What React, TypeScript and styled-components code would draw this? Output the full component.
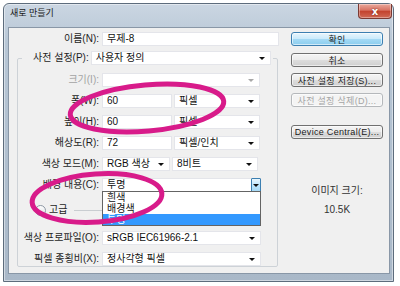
import styled, { createGlobalStyle } from 'styled-components'

const GlobalStyle = createGlobalStyle`
  html, body { margin:0; padding:0; background:#fff; }
  body { font-family:'Liberation Sans','Noto Sans CJK KR',sans-serif; }
  * { box-sizing:border-box; }
`

// ---| Window |-------------------------------------------

const Page = styled.div`
  position:relative;
  width:400px;
  height:286px;
  padding:3px 0 0 3px;
`

const Window = styled.div`
  width:391px;
  height:279px;
  padding:0 3px 7px 4px;
  display:flex;
  flex-direction:column;
  background:linear-gradient(#cbd6e2,#b7c6d5 40px,#a9b8c8);
  border:1px solid #5d6c7c;
  border-radius:6px 6px 0 0;
  box-shadow:inset 0 0 0 1px rgba(255,255,255,.45);
`

const TitleBar = styled.div`
  height:23px;
  display:flex;
  justify-content:space-between;
  align-items:flex-start;
`

const Title = styled.span`
  padding:4px 0 0 2px;
  font-size:9px;
  line-height:11px;
  color:#1b1b1b;
`

const CloseButton = styled.div`
  width:34px;
  height:15px;
  margin-right:-2px;
  display:flex;
  justify-content:center;
  align-items:center;
  background:linear-gradient(#eaa99c,#d87262 45%,#c3412c 50%,#d06a55);
  border:1px solid #7b3a33;
  border-top:none;
  border-radius:0 0 4px 4px;
  box-shadow:inset 0 0 0 1px rgba(255,255,255,.35);
  color:#fff;
  font:bold 10px 'DejaVu Sans',sans-serif;
  text-shadow:0 0 2px #6d1d12;
`

const Client = styled.div`
  flex:1;
  display:flex;
  padding:4px 0 0 8px;
  background:#f0f0f0;
  border:1px solid #8997a7;
`

// ---| Form |---------------------------------------------

const Form = styled.div`
  width:262px;
  display:flex;
  flex-direction:column;
  gap:5px;
`

const Row = styled.div<{ $label: number }>`
  height:14px;
  display:grid;
  grid-template-columns:${p => p.$label}px 1fr;
  column-gap:3px;
  align-items:center;
`

const Label = styled.label<{ $off?: boolean }>`
  text-align:right;
  white-space:nowrap;
  font-size:10px;
  line-height:12px;
  color:${p => (p.$off ? '#a3a3a3' : '#1e1e1e')};
`

const Controls = styled.div`
  display:flex;
  gap:2px;
`

const Field = styled.div<{ $w: number }>`
  position:relative;
  width:${p => p.$w}px;
  height:14px;
  display:flex;
  align-items:center;
  padding-left:4px;
  background:#fff;
  border:1px solid #e4e5ea;
  font-size:10px;
  line-height:12px;
  color:#111;
  white-space:nowrap;
`

const Arrow = styled.span<{ $off?: boolean }>`
  margin-left:auto;
  margin-right:5px;
  border-left:3px solid transparent;
  border-right:3px solid transparent;
  border-top:3px solid ${p => (p.$off ? '#a8a8a8' : '#111')};
`

const ArrowButton = styled.span`
  margin-left:auto;
  width:10px;
  height:14px;
  margin-right:-1px;
  display:flex;
  justify-content:center;
  align-items:center;
  background:linear-gradient(#eaf6fd,#bee6fd 50%,#a7d9f5);
  border:1px solid #3c7fb1;
  border-radius:1px;
  &::after {
    content:'';
    border-left:3px solid transparent;
    border-right:3px solid transparent;
    border-top:3px solid #111;
  }
`

const List = styled.ul`
  position:absolute;
  top:100%;
  left:-1px;
  width:159px;
  margin:0;
  padding:0;
  list-style:none;
  background:#fff;
  border:1px solid #646464;
  z-index:2;
`

const Item = styled.li<{ $on?: boolean }>`
  height:11px;
  padding-left:4px;
  font-size:10px;
  line-height:11px;
  background:${p => (p.$on ? '#3399ff' : 'transparent')};
  color:${p => (p.$on ? '#fff' : '#111')};
`

const Group = styled.fieldset`
  width:261px;
  margin:0;
  padding:8px 0 0 0;
  min-width:0;
  display:flex;
  flex-direction:column;
  gap:7px;
  border:1px solid #cdd2d7;
  border-radius:2px;
`

const Legend = styled.legend`
  margin-left:4px;
  padding:0 2px 0 11px;
  display:flex;
  align-items:center;
  gap:2px;
`

const Advanced = styled.div`
  height:20px;
  margin:1px 0 4px;
  padding-left:17px;
  display:flex;
  align-items:center;
  gap:3px;
`

const Expander = styled.span`
  width:11px;
  height:11px;
  border:1px solid #8e99a5;
  border-radius:50%;
  background:linear-gradient(#fdfdfd,#dfe3e7);
`

const Separator = styled.span`
  flex:1;
  margin:0 16px 0 4px;
  border-top:1px solid #c9cdd1;
`

// ---| Side |---------------------------------------------

const Side = styled.div`
  width:92px;
  margin-left:12px;
  display:flex;
  flex-direction:column;
  gap:6px;
`

const Button = styled.div<{ $primary?: boolean; $off?: boolean }>`
  height:14px;
  display:flex;
  justify-content:center;
  align-items:center;
  font-size:9px;
  letter-spacing:.3px;
  white-space:nowrap;
  border-radius:3px;
  color:${p => (p.$off ? '#a5a5a5' : '#1a1a1a')};
  border:1px solid ${p => (p.$primary ? '#3c7fb1' : p.$off ? '#b5b8bb' : '#707070')};
  background:${p =>
    p.$primary
      ? 'linear-gradient(#e9f6fd,#c9eafb 50%,#a5daf5 50%,#8bcdee)'
      : p.$off
      ? '#f4f4f4'
      : 'linear-gradient(#f4f4f4,#ebebeb 50%,#dddddd 50%,#cfcfcf)'};
  box-shadow:inset 0 0 0 1px rgba(255,255,255,.6);
  &:first-child { margin-bottom:1px; }
`

const SizeInfo = styled.div`
  margin-top:40px;
  display:flex;
  flex-direction:column;
  align-items:center;
  gap:7px;
  font-size:10px;
  line-height:12px;
  color:#333;
`

const Marks = styled.svg`
  position:absolute;
  left:0;
  top:0;
  pointer-events:none;
  z-index:5;
`

const sizes = [
  { label: '폭(W):', value: '60', unit: '픽셀' },
  { label: '높이(H):', value: '60', unit: '픽셀' },
]

export default function App() {
  return (
    <Page>
      <GlobalStyle />
      <Window>
        <TitleBar>
          <Title>새로 만들기</Title>
          <CloseButton>x</CloseButton>
        </TitleBar>
        <Client>
          <Form>
            <Row $label={82}>
              <Label>이름(N):</Label>
              <Field $w={177}>무제-8</Field>
            </Row>
            <Group>
              <Legend>
                <Label>사전 설정(P):</Label>
                <Field $w={180}>
                  사용자 정의<Arrow />
                </Field>
              </Legend>
              <Row $label={81}>
                <Label $off>크기(I):</Label>
                <Field $w={158}>
                  <Arrow $off />
                </Field>
              </Row>
              {sizes.map(s => (
                <Row $label={81} key={s.label}>
                  <Label>{s.label}</Label>
                  <Controls>
                    <Field $w={70}>{s.value}</Field>
                    <Field $w={86}>
                      {s.unit}
                      <Arrow />
                    </Field>
                  </Controls>
                </Row>
              ))}
              <Row $label={81}>
                <Label>해상도(R):</Label>
                <Controls>
                  <Field $w={70}>72</Field>
                  <Field $w={86}>
                    픽셀/인치
                    <Arrow />
                  </Field>
                </Controls>
              </Row>
              <Row $label={81}>
                <Label>색상 모드(M):</Label>
                <Controls>
                  <Field $w={68}>
                    RGB 색상
                    <Arrow />
                  </Field>
                  <Field $w={86}>
                    8비트
                    <Arrow />
                  </Field>
                </Controls>
              </Row>
              <Row $label={81}>
                <Label>배경 내용(C):</Label>
                <Field $w={159}>
                  투명
                  <ArrowButton />
                  <List>
                    <Item>흰색</Item>
                    <Item>배경색</Item>
                    <Item $on>투명</Item>
                  </List>
                </Field>
              </Row>
              <Advanced>
                <Expander />
                <Label>고급</Label>
                <Separator />
              </Advanced>
              <Row $label={81}>
                <Label>색상 프로파일(O):</Label>
                <Field $w={159}>
                  sRGB IEC61966-2.1
                  <Arrow />
                </Field>
              </Row>
              <Row $label={81}>
                <Label>픽셀 종횡비(X):</Label>
                <Field $w={159}>
                  정사각형 픽셀
                  <Arrow />
                </Field>
              </Row>
            </Group>
          </Form>
          <Side>
            <Button $primary>확인</Button>
            <Button>취소</Button>
            <Button>사전 설정 저장(S)...</Button>
            <Button $off>사전 설정 삭제(D)...</Button>
            <Button style={{ marginTop: 12 }}>Device Central(E)...</Button>
            <SizeInfo>
              <span>이미지 크기:</span>
              <span>10.5K</span>
            </SizeInfo>
          </Side>
        </Client>
      </Window>
      <Marks width="400" height="286" viewBox="0 0 400 286">
        <ellipse cx="147" cy="108" rx="77" ry="23" transform="rotate(-5 147 108)" fill="none" stroke="#d81b8a" strokeWidth="5" />
        <ellipse cx="97" cy="198" rx="65" ry="24" transform="rotate(-4 97 198)" fill="none" stroke="#d81b8a" strokeWidth="5" />
      </Marks>
    </Page>
  )
}
